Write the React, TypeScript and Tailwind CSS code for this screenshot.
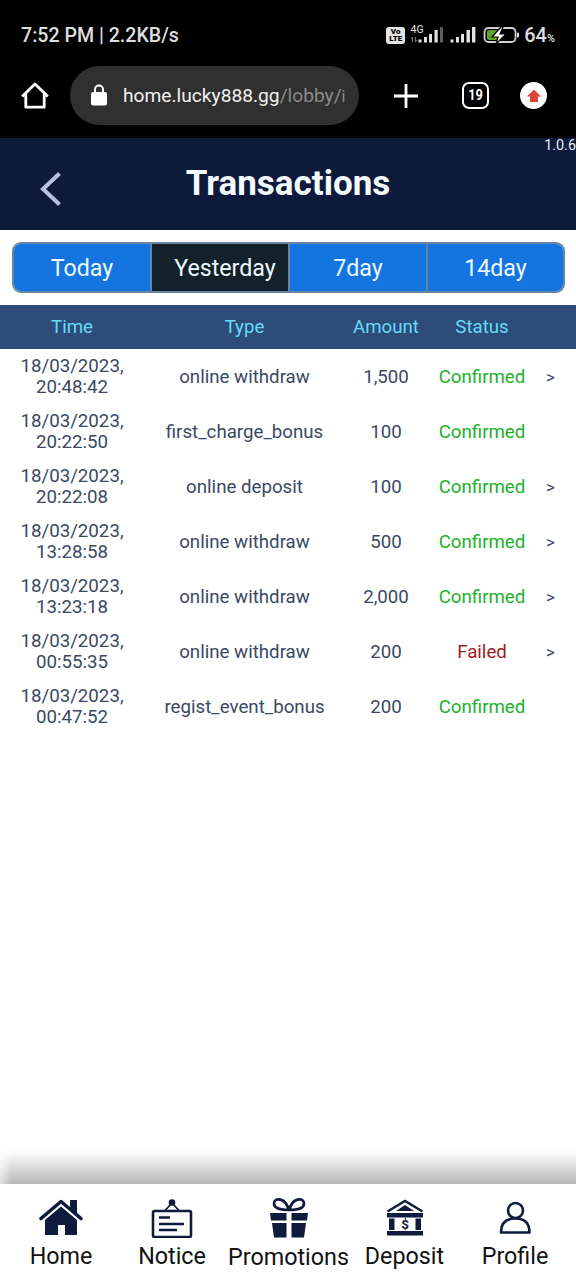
import React, { useState } from 'react';

interface Transaction {
  date: string;
  time: string;
  type: string;
  amount: string;
  status: 'Confirmed' | 'Failed';
  hasDetail: boolean;
}

const TRANSACTIONS: Transaction[] = [
  { date: '18/03/2023,', time: '20:48:42', type: 'online withdraw', amount: '1,500', status: 'Confirmed', hasDetail: true },
  { date: '18/03/2023,', time: '20:22:50', type: 'first_charge_bonus', amount: '100', status: 'Confirmed', hasDetail: false },
  { date: '18/03/2023,', time: '20:22:08', type: 'online deposit', amount: '100', status: 'Confirmed', hasDetail: true },
  { date: '18/03/2023,', time: '13:28:58', type: 'online withdraw', amount: '500', status: 'Confirmed', hasDetail: true },
  { date: '18/03/2023,', time: '13:23:18', type: 'online withdraw', amount: '2,000', status: 'Confirmed', hasDetail: true },
  { date: '18/03/2023,', time: '00:55:35', type: 'online withdraw', amount: '200', status: 'Failed', hasDetail: true },
  { date: '18/03/2023,', time: '00:47:52', type: 'regist_event_bonus', amount: '200', status: 'Confirmed', hasDetail: false },
];

const TABS = ['Today', 'Yesterday', '7day', '14day'];

const StatusBar: React.FC = () => (
  <div className="h-[66px] pt-1 pl-[21px] pr-[21px] flex items-center justify-between text-[#dedede]">
    <span className="pt-[2px] text-[19.6px] font-medium">7:52 PM | 2.2KB/s</span>
    <div className="flex items-center">
      {/* VoLTE badge */}
      <div className="w-[19px] h-[17px] rounded-[3px] bg-[#e4e4e4] text-black text-[8px] leading-[7px] font-black flex flex-col items-center justify-center">
        <span>Vo</span>
        <span>LTE</span>
      </div>
      {/* Signal bars */}
      <svg className="ml-[5px] w-[36px] h-[20px] overflow-visible" viewBox="0 0 36 20" fill="#e2e2e2">
        <text x="0.500" y="8" fontSize="10.500" fontFamily="Roboto, sans-serif">4G</text>
        <path d="M2.500 12v5M1 14l1.500-2M5.500 12v5l1.500-2" stroke="#777" strokeWidth="1" fill="none" />
        <rect x="8.500" y="14.500" width="3" height="3" />
        <rect x="14" y="12" width="3" height="5.500" />
        <rect x="19" y="9" width="3" height="8.500" />
        <rect x="24.500" y="5" width="3.200" height="12.500" />
        <rect x="30" y="2" width="3" height="15.500" fill="#5c5c5c" />
      </svg>
      <svg className="ml-[4px] w-[27px] h-[20px]" viewBox="0 0 27 20" fill="#e2e2e2">
        <rect x="0.500" y="14.500" width="3" height="3" />
        <rect x="6" y="12" width="3" height="5.500" />
        <rect x="11" y="9" width="3" height="8.500" />
        <rect x="16.500" y="5" width="3.400" height="12.500" />
        <rect x="22" y="2" width="3.400" height="15.500" />
      </svg>
      {/* Battery */}
      <svg className="ml-[6px] -mt-px w-[38px] h-[18px]" viewBox="0 0 38 18" fill="none">
        <rect x="1.500" y="2" width="31" height="14" rx="4" stroke="#cfcfcf" strokeWidth="1.800" />
        <path d="M6 4h12l-4 10H6q-2 0-2-2V6q0-2 2-2z" fill="#5fa51f" />
        <path d="M18 1l-9 10h6l-2 7 10-10h-6l3-7z" fill="#fff" stroke="#000" strokeWidth="1.200" />
        <rect x="34" y="6.500" width="2" height="5" rx="1" fill="#e2e2e2" />
      </svg>
      <span className="ml-[3px] pt-[3px] text-[20px] leading-5 font-medium">64<span className="text-[11px]">%</span></span>
    </div>
  </div>
);

const BrowserBar: React.FC = () => (
  <div className="h-[72px] flex items-start">
    <svg className="ml-[21px] mt-[15px] w-7 h-7" viewBox="0 0 28 28" fill="none" stroke="#fff" strokeWidth="2.800" strokeLinejoin="round">
      <path d="M1.200 15.500L14 3l12.800 12.500M4.800 13v13.200h18.400V13" />
    </svg>
    <div className="ml-[21px] w-[289px] h-[58.500px] rounded-full bg-[#303030] flex items-center pl-[21px]">
      <svg className="w-4 h-[22px]" viewBox="0 0 16 22" fill="#fff">
        <rect x="0" y="8" width="16" height="13.500" rx="2" />
        <path d="M4 9V5.500a4 4 0 018 0V9" fill="none" stroke="#fff" strokeWidth="2" />
      </svg>
      <div className="ml-4 pt-[3px] whitespace-nowrap text-[19.2px] text-[#f1f1f1]">
        home.lucky888.gg<span className="text-[#8a8a8a]">/lobby/<span className="text-[16px]">i</span></span>
      </div>
    </div>
    <svg className="ml-[35px] mt-[18px] w-6 h-6" viewBox="0 0 24 24" stroke="#fff" strokeWidth="2.800">
      <path d="M12 0v24M0 12h24" />
    </svg>
    <div className="ml-[44px] mt-4 w-[27px] h-[27px] rounded-[7px] border-[2.500px] border-white flex items-center justify-center text-white text-[15px] font-bold leading-none">
      <span className="scale-x-85">19</span>
    </div>
    <div className="ml-[31px] mt-4 w-[27px] h-[27px] rounded-full bg-white flex items-center justify-center">
      <svg className="w-4 h-4" viewBox="0 0 16 16" fill="#e04338">
        <path d="M8 1.500l7 7h-3V14H4V8.500H1z" />
      </svg>
    </div>
  </div>
);

const HomeIcon = () => (
  <svg className="w-11 h-9" viewBox="0 0 44 36" fill="#0f1b3d">
    <path d="M2 19.500L22 2.500l20 17" fill="none" stroke="#0f1b3d" strokeWidth="3.600" strokeLinejoin="round" strokeLinecap="round" />
    <path d="M31 1h7v14l-7-6z" />
    <path d="M22 7.500l16 13.500V36H26V26h-7v10H6V21z" />
  </svg>
);

const NoticeIcon = () => (
  <svg className="w-[42px] h-[39px]" viewBox="0 0 42 39" fill="none" stroke="#0f1b3d">
    <rect x="2" y="12" width="38" height="26" rx="1.500" strokeWidth="2.600" />
    <path d="M14.500 11l6.500-7 6.500 7" strokeWidth="1.800" />
    <circle cx="21" cy="3.500" r="3.300" fill="#0f1b3d" stroke="none" />
    <path d="M8 18.500h11M8 25h25M8 31h18" strokeWidth="2.600" />
  </svg>
);

const GiftIcon = () => (
  <svg className="w-10 h-[41px]" viewBox="0 0 40 41" fill="#0f1b3d">
    <path d="M19.500 13C12 13 5 11.500 5 6.500 5-.5 17.500 1 19.500 13zM20.500 13c7.500 0 14.500-1.500 14.500-6.500C35-.5 22.500 1 20.500 13z" fill="none" stroke="#0f1b3d" strokeWidth="2.700" />
    <path d="M1 16h16.500v7.500H2zM22.500 16H39l-1 7.500H22.500zM3 26h14.500v14.500H5zM22.500 26H37l-2 14.500H22.500z" />
  </svg>
);

const BankIcon = () => (
  <svg className="w-[38px] h-[37px]" viewBox="0 0 38 37" fill="#0f1b3d">
    <path d="M1.500 12.500L19 2l17.500 10.500" fill="none" stroke="#0f1b3d" strokeWidth="2.500" />
    <path d="M19 6l9 6H10z" />
    <path d="M1 14h36v4.500H1zM3 19.500h5.500V31H3zM29.500 19.500H35V31h-5.500zM1 32h36v4.500H1z" />
    <text x="19" y="30" textAnchor="middle" fontSize="13.500" fontWeight="700" fontFamily="Roboto, sans-serif">$</text>
  </svg>
);

const ProfileIcon = () => (
  <svg className="w-8 h-[33px]" viewBox="0 0 32 33" fill="none" stroke="#0f1b3d" strokeWidth="2.600">
    <circle cx="16.500" cy="9.500" r="7.500" />
    <path d="M2 31.500c0-9 5-14 14.500-14s14 5 14 14z" strokeLinejoin="round" />
  </svg>
);

const App: React.FC = () => {
  const [activeTab, setActiveTab] = useState('Yesterday');

  return (
    <div className="w-[576px] h-[1280px] overflow-hidden bg-white flex flex-col font-[Roboto,sans-serif]">
      {/* Phone and browser chrome */}
      <div className="h-[138px] shrink-0 bg-black">
        <StatusBar />
        <BrowserBar />
      </div>

      {/* Page title */}
      <header className="relative h-[92px] shrink-0 bg-[#0e1a3a] flex items-center justify-center">
        <svg className="absolute left-10 top-[33px] w-[22px] h-9" viewBox="0 0 22 36" fill="none" stroke="#b8c0e4" strokeWidth="4">
          <path d="M19.500 2.500L3 18l16.500 15.500" />
        </svg>
        <h1 className="text-[35px] font-bold text-[#f5faff]">Transactions</h1>
        <span className="absolute right-0 top-0 text-[14.4px] leading-[15px] text-[#e8ebf2]">1.0.6</span>
      </header>

      {/* Date range tabs */}
      <div className="h-[75px] shrink-0 px-[12px] pt-3">
        <div className="w-[553px] h-[51px] grid grid-cols-[136px_138px_138px_137px] rounded-[9px] overflow-hidden border-2 border-[#6685a3]">
          {TABS.map((tab, i) => (
            <button
              key={tab}
              onClick={() => setActiveTab(tab)}
              className={`min-w-0 pt-px text-[23.2px] text-[#eefaff] ${i > 0 ? 'border-l-2 border-[#6685a3]' : ''} ${activeTab === tab ? 'bg-[#13212a] pl-[10px]' : 'bg-[#1474e0]'}`}
            >
              {tab}
            </button>
          ))}
        </div>
      </div>

      {/* Transactions table */}
      <main className="flex-1 text-[18.7px] text-[#3a4963]">
        <div className="h-[44px] pt-px grid grid-cols-[144px_201px_82px_110px_27px] items-center text-center bg-[#2e4c79] text-[#63dcf5]">
          <span>Time</span>
          <span>Type</span>
          <span>Amount</span>
          <span>Status</span>
        </div>
        {TRANSACTIONS.map((t) => (
          <div key={t.time} className="h-[55px] pt-px grid grid-cols-[144px_201px_82px_110px_27px] items-center text-center leading-[21px]">
            <span className="pb-px">{t.date}<br />{t.time}</span>
            <span>{t.type}</span>
            <span>{t.amount}</span>
            <span className={t.status === 'Failed' ? 'text-[#9f1c1c]' : 'text-[#21b12b]'}>{t.status}</span>
            {t.hasDetail && <span className="text-[17px]">&gt;</span>}
          </div>
        ))}
      </main>

      {/* Bottom navigation */}
      <div className="h-[34px] shrink-0 bg-linear-to-b from-white via-[#dedede] to-[#b5b5b5]">
        <div className="w-3 h-full bg-linear-to-r from-white/60 to-transparent" />
      </div>
      <nav className="h-[96px] shrink-0 bg-white flex text-[23.3px] leading-[27px] text-[#111]">
        <div className="w-[122px] pt-[15px] flex flex-col items-center">
          <div className="h-11"><HomeIcon /></div>
          <span>Home</span>
        </div>
        <div className="w-[100px] pt-[15px] flex flex-col items-center">
          <div className="h-11"><NoticeIcon /></div>
          <span>Notice</span>
        </div>
        <div className="w-[133px] pt-[13px] flex flex-col items-center">
          <div className="h-[47px]"><GiftIcon /></div>
          <span>Promotions</span>
        </div>
        <div className="w-[99px] pt-[15px] flex flex-col items-center">
          <div className="h-11"><BankIcon /></div>
          <span>Deposit</span>
        </div>
        <div className="w-[122px] pt-[17px] flex flex-col items-center">
          <div className="h-[42px]"><ProfileIcon /></div>
          <span>Profile</span>
        </div>
      </nav>
    </div>
  );
};

export default App;
